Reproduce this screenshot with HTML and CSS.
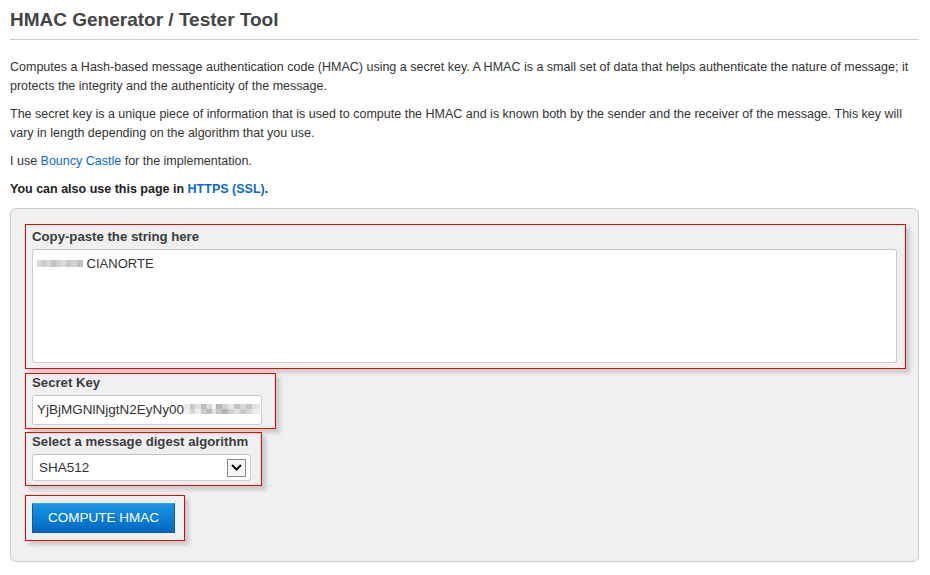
FILE: index.html
```html
<!DOCTYPE html>
<html>
<head>
<meta charset="utf-8">
<title>HMAC Generator / Tester Tool</title>
<link rel="stylesheet" href="styles.css">
</head>
<body>
<div class="page">
  <h1 class="title">HMAC Generator / Tester Tool</h1>
  <p class="text">Computes a Hash-based message authentication code (HMAC) using a secret key. A HMAC is a small set of data that helps authenticate the nature of message; it protects the integrity and the authenticity of the message.</p>
  <p class="text">The secret key is a unique piece of information that is used to compute the HMAC and is known both by the sender and the receiver of the message. This key will vary in length depending on the algorithm that you use.</p>
  <p class="text">I use <a class="link" href="#">Bouncy Castle</a> for the implementation.</p>
  <p class="text text-bold">You can also use this page in <a class="link" href="#">HTTPS (SSL)</a>.</p>

  <div class="panel">
    <div class="mark mark-string">
      <div class="field-label">Copy-paste the string here</div>
      <div class="textarea"><span class="blur blur-string"></span> CIANORTE</div>
    </div>
    <div class="mark mark-key">
      <div class="field-label">Secret Key</div>
      <div class="input">YjBjMGNlNjgtN2EyNy00<span class="blur blur-key"></span></div>
    </div>
    <div class="mark mark-algo">
      <div class="field-label">Select a message digest algorithm</div>
      <div class="select">
        <span class="select-value">SHA512</span>
        <span class="select-arrow">
          <svg width="11" height="7" viewBox="0 0 11 7"><path d="M1 1 L5.5 5.5 L10 1" fill="none" stroke="#111" stroke-width="2"/></svg>
        </span>
      </div>
    </div>
    <div class="mark mark-button">
      <div class="button">COMPUTE HMAC</div>
    </div>
  </div>
</div>
</body>
</html>
```

FILE: styles.css
```css
html, body {
  margin: 0;
  padding: 0;
  background: #ffffff;
}

body {
  font-family: "Liberation Sans", Arial, sans-serif;
  font-size: 13px;
  color: #333333;
}

.page {
  width: 909px;
  margin-left: 10px;
}

.title {
  margin: 0;
  padding: 8px 0 7px;
  font-size: 19px;
  line-height: 24px;
  font-weight: bold;
  color: #444444;
  border-bottom: 1px solid #cccccc;
}

.text {
  margin: 0 0 9px;
  font-size: 12.5px;
  line-height: 19px;
}

.title + .text {
  margin-top: 18px;
}

.text-bold {
  font-weight: bold;
  color: #222222;
}

.link {
  color: #0a6bcc;
  text-decoration: none;
}

.panel {
  margin-top: 8px;
  background: #f0f0f0;
  border: 1px solid #cccccc;
  border-radius: 6px;
  padding: 15px 0 20px 14px;
}

.mark {
  box-sizing: border-box;
  border: 1px solid #ee0000;
  box-shadow: 4px 4px 4px rgba(0, 0, 0, 0.16);
  padding-left: 6px;
}

.mark-string {
  width: 881px;
  padding-top: 4px;
  padding-bottom: 5px;
}

.mark-key {
  width: 251px;
  margin-top: 4px;
  padding-top: 1px;
  padding-bottom: 3px;
}

.mark-algo {
  width: 237px;
  margin-top: 3px;
  padding-top: 1px;
  padding-bottom: 4px;
}

.mark-button {
  width: 160px;
  margin-top: 9px;
  padding-top: 7px;
  padding-bottom: 7px;
}

.field-label {
  font-weight: bold;
  font-size: 13.2px;
  line-height: 16px;
  color: #3c3c3c;
  margin-bottom: 4px;
}

.textarea,
.input,
.select {
  box-sizing: border-box;
  background: #ffffff;
  border: 1px solid #cccccc;
  border-top-color: #c4c4c4;
  border-radius: 3px;
  color: #333333;
}

.textarea {
  width: 865px;
  height: 114px;
  padding: 6px 4px;
  line-height: 16px;
}

.input {
  width: 230px;
  height: 30px;
  padding: 0 0 0 4px;
  line-height: 28px;
  white-space: nowrap;
  overflow: hidden;
  font-size: 13.5px;
}

.blur {
  display: inline-block;
  vertical-align: middle;
}

.blur-string {
  width: 46px;
  height: 7px;
  margin-top: -2px;
  background:
    linear-gradient(90deg,
      #dadada 0 4px, #cbcbcb 4px 9px, #d6d6d6 9px 14px, #c4c4c4 14px 19px,
      #d0d0d0 19px 24px, #dcdcdc 24px 29px, #c8c8c8 29px 34px, #d3d3d3 34px 40px,
      #c2c2c2 40px 46px);
}

.blur-key {
  width: 76px;
  height: 10px;
  margin-top: -3px;
  background:
    linear-gradient(90deg,
      #ececec 0 6px, #c9c9c9 6px 11px, #e0e0e0 11px 17px, #bcbcbc 17px 22px,
      #d8d8d8 22px 28px, #f2f2f2 28px 32px, #b8b8b8 32px 38px, #d4d4d4 38px 44px,
      #e6e6e6 44px 50px, #c2c2c2 50px 56px, #dadada 56px 62px, #c6c6c6 62px 68px,
      #e2e2e2 68px 76px) top / 100% 5px no-repeat,
    linear-gradient(90deg,
      #f0f0f0 0 6px, #d8d8d8 6px 11px, #eeeeee 11px 17px, #cccccc 17px 22px,
      #bdbdbd 22px 28px, #e2e2e2 28px 32px, #c8c8c8 32px 38px, #b4b4b4 38px 44px,
      #d0d0d0 44px 50px, #dedede 50px 56px, #cacaca 56px 62px, #d6d6d6 62px 68px,
      #ececec 68px 76px) bottom / 100% 5px no-repeat;
}

.select {
  width: 219px;
  height: 27px;
  display: flex;
  align-items: center;
  justify-content: space-between;
  padding: 0 4px 0 6px;
}

.select-value {
  font-size: 13.5px;
}

.select-arrow {
  box-sizing: border-box;
  width: 19px;
  height: 18px;
  border: 1px solid #8a8a8a;
  background: #f4f4f4;
  display: flex;
  align-items: center;
  justify-content: center;
}

.button {
  box-sizing: border-box;
  width: 143px;
  height: 30px;
  line-height: 28px;
  text-align: center;
  color: #ffffff;
  font-size: 13.5px;
  background: linear-gradient(#1a95e4, #0068c2);
  border: 1px solid #0a5ea8;
  border-top-color: #3aa4ea;
}
```
